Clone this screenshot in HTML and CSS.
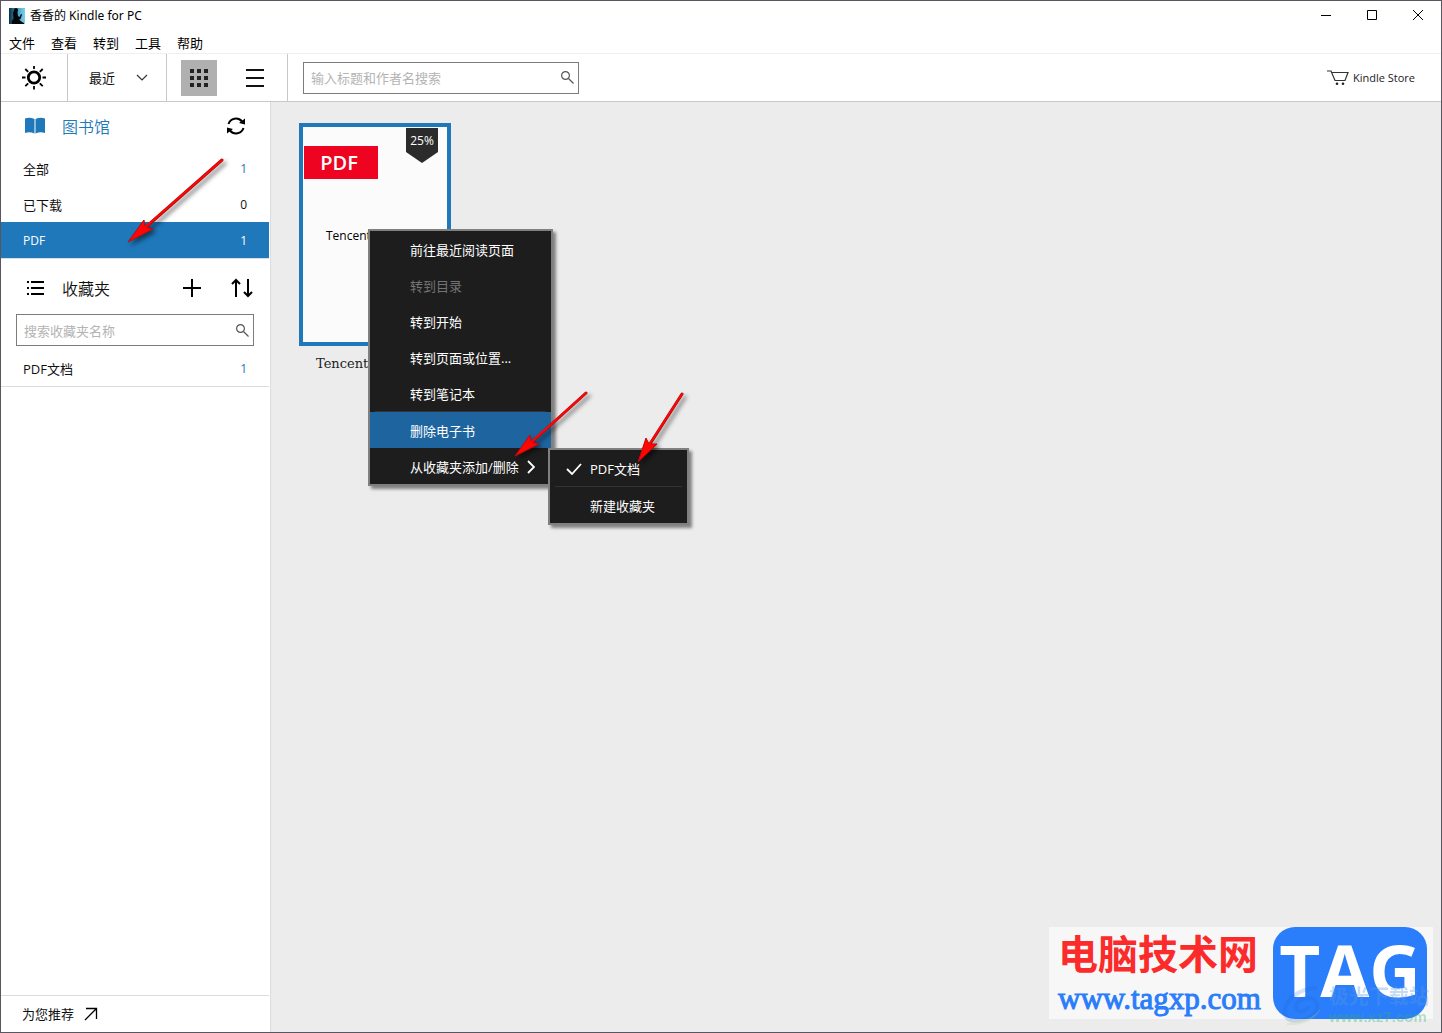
FILE: index.html
```html
<!DOCTYPE html>
<html lang="zh-CN">
<head>
<meta charset="utf-8">
<meta name="viewport" content="width=device-width, initial-scale=1">
<title>香香的 Kindle for PC</title>
<link rel="stylesheet" href="styles.css">
</head>
<body>
<div class="window">
  <header class="titlebar">
    <svg class="app-icon" viewBox="0 0 16 16" aria-hidden="true">
      <defs><linearGradient id="sky" x1="0" y1="0" x2="1" y2="0"><stop offset="0" stop-color="#0d2c40"/><stop offset=".5" stop-color="#3f9cc4"/><stop offset="1" stop-color="#7fd0e6"/></linearGradient></defs>
      <rect width="16" height="16" fill="url(#sky)"/>
      <path d="M5 2a2 2 0 0 1 4 0l-.5 2.500L9 8l1.500 1L12 6l1 .5L11.500 11 10 11.500 13 14l2 1v1H3c-1-2 0-4 1.500-5L4 5z" fill="#02070b"/>
    </svg>
    <h1 class="title">香香的 Kindle for PC</h1>
    <div class="controls">
      <button class="control" aria-label="最小化"><svg width="12" height="12" viewBox="0 0 12 12"><path d="M1 5.500h10" stroke="#000" fill="none"/></svg></button>
      <button class="control" aria-label="最大化"><svg width="12" height="12" viewBox="0 0 12 12"><path d="M1.500 .5h9v9h-9z" stroke="#000" fill="none"/></svg></button>
      <button class="control" aria-label="关闭"><svg width="12" height="12" viewBox="0 0 12 12"><path d="M1 0l10 10M11 0L1 10" stroke="#000" fill="none"/></svg></button>
    </div>
  </header>

  <nav class="menubar">
    <button>文件</button><button>查看</button><button>转到</button><button>工具</button><button>帮助</button>
  </nav>

  <div class="toolbar">
    <button class="theme" aria-label="主题">
      <svg width="24" height="24" viewBox="0 0 24 24" fill="none" stroke="#000">
        <circle cx="12" cy="11.500" r="5.700" stroke-width="2.800"/>
        <path d="M12 0v3M12 20v3.500M0 11.500h3.500M20.500 11.500H24M3.300 3l2.900 2.900M17.800 17.300l2.900 2.900M3.300 20.200l2.900-2.900M17.800 5.900L20.700 3" stroke-width="1.800"/>
      </svg>
    </button>
    <button class="sort">最近
      <svg width="12" height="8" viewBox="0 0 12 8"><path d="M1 1l5 5 5-5" fill="none" stroke="#333" stroke-width="1.200"/></svg>
    </button>
    <div class="views">
      <button class="view active" aria-label="网格视图">
        <svg width="18" height="18" viewBox="0 0 18 18" fill="#222"><path d="M0 0h4v4H0zM7 0h4v4H7zM14 0h4v4h-4zM0 7h4v4H0zM7 7h4v4H7zM14 7h4v4h-4zM0 14h4v4H0zM7 14h4v4H7zM14 14h4v4h-4z"/></svg>
      </button>
      <button class="view" aria-label="列表视图">
        <svg width="18" height="18" viewBox="0 0 18 18"><path d="M0 1h18M0 9h18M0 17h18" stroke="#111" stroke-width="2"/></svg>
      </button>
    </div>
    <label class="search">
      <input type="text" placeholder="输入标题和作者名搜索" aria-label="搜索图书">
      <svg class="lens" viewBox="0 0 13 13"><circle cx="4.500" cy="4.500" r="3.900"/><path d="M7.500 7.500L12.500 12.500"/></svg>
    </label>
    <a class="store" href="#store">
      <svg width="22" height="16" viewBox="0 0 22 16"><path d="M0 1h4l4 9.500h10L21 2.500H5" fill="none" stroke="#333" stroke-width="1.200"/><circle cx="10" cy="13.700" r="1.300" fill="#222"/><circle cx="16" cy="13.700" r="1.300" fill="#222"/></svg>
      Kindle Store
    </a>
  </div>

  <div class="body">
    <aside class="sidebar">
      <div class="section-head library">
        <svg class="section-icon" viewBox="0 0 20 18"><path d="M0 1.500C3 .5 6 .5 9.500 2v14.500C6 15 3 15 0 16zM10.500 2C14 .5 17 .5 20 1.500V16c-3-1-6-1-9.500.5z" fill="#1f78ba"/></svg>
        <h2>图书馆</h2>
        <button class="sync" aria-label="同步">
          <svg width="18" height="18" viewBox="0 0 18 18"><path d="M1.500 7A7.800 7.800 0 0 1 15 4.500M16.500 11A7.800 7.800 0 0 1 3 13.500" fill="none" stroke="#000" stroke-width="2"/><path d="M18 1.500v6l-6-1.500zM0 16.500v-6l6 1.500z"/></svg>
        </button>
      </div>
      <ul class="list">
        <li><a href="#all">全部 <span class="count blue">1</span></a></li>
        <li><a href="#downloaded">已下载 <span class="count">0</span></a></li>
        <li><a class="selected" href="#pdf">PDF <span class="count">1</span></a></li>
      </ul>
      <div class="section-head collections">
        <svg class="section-icon" viewBox="0 0 20 18"><path d="M6 3h13M6 9h13M6 15h13" stroke="#000" stroke-width="2"/><path d="M2 2h2v2H2zM2 8h2v2H2zM2 14h2v2H2z"/></svg>
        <h2>收藏夹</h2>
        <button class="add" aria-label="新建收藏夹"><svg width="18" height="18" viewBox="0 0 18 18"><path d="M0 9h18M9 0v18" stroke="#000" stroke-width="2"/></svg></button>
        <button class="order" aria-label="排序"><svg width="22" height="20" viewBox="0 0 22 20" fill="none" stroke="#000" stroke-width="2"><path d="M5 19V2M1 6l4-4 4 4M17 1v17M13 14l4 4 4-4"/></svg></button>
      </div>
      <label class="search">
        <input type="text" placeholder="搜索收藏夹名称" aria-label="搜索收藏夹">
        <svg class="lens" viewBox="0 0 13 13"><circle cx="4.500" cy="4.500" r="3.900"/><path d="M7.500 7.500L12.500 12.500"/></svg>
      </label>
      <ul class="list">
        <li><a href="#pdf-docs">PDF文档 <span class="count blue">1</span></a></li>
      </ul>
      <a class="recommend" href="#recommend">为您推荐
        <svg width="14" height="14" viewBox="0 0 14 14"><path d="M1 13L12.500 1.500M2 1.500h10.500V12" fill="none" stroke="#000" stroke-width="1.300"/></svg>
      </a>
    </aside>

    <main class="content">
      <article class="book">
        <div class="cover">
          <span class="format">PDF</span>
          <span class="cover-title">Tencent</span>
          <span class="progress">25%</span>
        </div>
        <h3 class="book-title">Tencent</h3>
      </article>

      <div class="menu book-menu" role="menu">
        <button role="menuitem">前往最近阅读页面</button>
        <button role="menuitem" disabled>转到目录</button>
        <button role="menuitem">转到开始</button>
        <button role="menuitem">转到页面或位置...</button>
        <button role="menuitem">转到笔记本</button>
        <hr>
        <button role="menuitem" class="hover">删除电子书</button>
        <button role="menuitem">从收藏夹添加/删除
          <svg class="chevron" width="8" height="14" viewBox="0 0 8 14"><path d="M1 1l6 6-6 6" fill="none" stroke="#fff" stroke-width="1.800"/></svg>
        </button>
      </div>
      <div class="menu sub-menu" role="menu">
        <button role="menuitem"><svg class="check" width="16" height="12" viewBox="0 0 16 12"><path d="M1 6l5 5L15 1" fill="none" stroke="#fff" stroke-width="1.800"/></svg>PDF文档</button>
        <hr>
        <button role="menuitem">新建收藏夹</button>
      </div>

      <div class="watermark">
        <div class="site">
          <strong>电脑技术网</strong>
          <span>www.tagxp.com</span>
        </div>
        <div class="tag">TAG</div>
        <div class="partner">
          <svg width="44" height="40" viewBox="0 0 44 40" fill="none">
            <path d="M34 2C16 2 0 15 2 28c2 9 17 9 26 2 9-6 8-18-3-18-9 0-15 8-11 12 4 3 11 0 11-4" stroke="#1c62c4" stroke-width="4" opacity=".5"/>
            <path d="M4 37c12 0 26-4 34-15-5 12-18 18-34 17z" fill="#b9c977" opacity=".7"/>
          </svg>
          <div><span class="partner-name">极光下载站</span><span class="partner-url">www.xz7.com</span></div>
        </div>
      </div>
    </main>
  </div>

  <svg class="pointers" width="700" height="540" viewBox="0 0 700 540" aria-hidden="true">
    <g stroke="#a01010" stroke-width="3" stroke-linecap="round"><path d="M222 160L146 227M586 393L533 441M682 394L650 444"/></g>
    <g fill="#ff0505" stroke="#c00808" stroke-width="1" stroke-linejoin="round"><path d="M128 242l16-22 1 7 8 2zM515 456l15-21 1 7 8 2zM638 462l8-24 3 6 8 0z"/></g>
    <g stroke="#ff0505" stroke-width="2" stroke-linecap="round"><path d="M222 160L142 230M586 393L528 445M682 394L647 448"/></g>
  </svg>
</div>
</body>
</html>
```

FILE: styles.css
```css
* { box-sizing: border-box; }

body {
  margin: 0;
  font: 13px/18px "Open Sans", "Noto Sans CJK SC", sans-serif;
  color: #111;
}

button, input { font: inherit; color: inherit; }
button { padding: 0; border: 0; background: none; }
a { color: inherit; text-decoration: none; }
h1, h2, h3, ul { margin: 0; padding: 0; font-weight: 400; list-style: none; }
svg { display: block; flex: none; }

.window {
  position: relative;
  display: flex;
  flex-direction: column;
  min-height: 100vh;
  border: 1px solid #5a5560;
  background: #fff;
}

.titlebar { display: flex; align-items: center; height: 29px; padding-left: 8px; }
.app-icon { width: 16px; height: 16px; }
.title { margin-left: 5px; font: 12px/18px "Noto Sans", "Noto Sans CJK SC", sans-serif; color: #000; }
.controls { display: flex; margin-left: auto; }
.control { display: grid; place-items: center; width: 46px; height: 29px; }

.menubar {
  display: flex;
  gap: 16px;
  height: 24px;
  padding: 2px 0 0 8px;
  border-bottom: 1px solid #f0f0f0;
  color: #000;
}

.toolbar {
  display: flex;
  align-items: center;
  height: 48px;
  border-bottom: 1px solid #c8c8c8;
}
.theme, .sort, .views { height: 100%; border-right: 1px solid #c8c8c8; }
.theme { display: grid; place-items: center; width: 67px; }
.sort { display: flex; align-items: center; gap: 21px; width: 99px; padding-left: 21px; }
.views { display: flex; align-items: center; gap: 20px; width: 121px; padding-left: 14px; }
.view { display: grid; place-items: center; width: 36px; height: 36px; }
.view.active { background: #b0b0b0; }

.search {
  display: flex;
  align-items: center;
  height: 32px;
  border: 1px solid #7c7c7c;
  background: #fff;
}
.search input { flex: 1; min-width: 0; padding: 1px 7px 0; border: 0; outline: 0; background: none; }
.search input::placeholder { color: #b4b4b4; opacity: 1; }
.lens { width: 13px; height: 13px; margin-right: 4px; fill: none; stroke: #555; stroke-width: 1.200; }
.toolbar .search { width: 276px; margin-left: 15px; }

.store { display: flex; align-items: center; gap: 4px; margin: 0 26px 0 auto; font-size: 11px; color: #222; }

.body { display: flex; flex: 1; }

.sidebar {
  display: flex;
  flex: none;
  flex-direction: column;
  width: 270px;
  padding-right: 1px;
  border-right: 1px solid #dcdcdc;
}
.section-head { display: flex; align-items: center; padding-left: 24px; }
.section-head h2 { flex: 1; margin-left: 17px; padding-top: 2px; font-size: 16px; line-height: 24px; font-weight: 350; }
.section-icon { width: 20px; height: 18px; }
.library { height: 48px; color: #1f78ba; }
.sync { margin-right: 24px; }
.collections { height: 57px; }
.add { margin-right: 30px; }
.order { margin-right: 16px; }

.list { border-bottom: 1px solid #dcdcdc; }
.list a { display: flex; align-items: center; justify-content: space-between; height: 36px; padding: 2px 22px 0; }
.list .selected { background: #1f78ba; color: #fff; }
.list a, .count { font-size: 13px; }
.list .selected, .count { font-size: 12px; }
.blue { color: #1f78ba; }
.sidebar .search { margin: -2px 15px 4px; }
.recommend {
  display: flex;
  align-items: center;
  gap: 10px;
  height: 37px;
  margin-top: auto;
  padding-left: 21px;
  border-top: 1px solid #dcdcdc;
}

.content { position: relative; flex: 1; min-width: 0; padding: 21px 28px; background: #ececec; }

.book { width: 152px; }
.cover { position: relative; height: 223px; padding: 19px 1px; border: 4px solid #1f78ba; background: #fbfbfb; }
.format {
  display: block;
  width: 74px;
  height: 33px;
  padding-right: 4px;
  background: #ee0420;
  color: #fff;
  font: 600 20px/33px "Open Sans", sans-serif;
  text-align: center;
}
.cover-title { display: block; margin: 48px 0 0 22px; font-size: 12px; color: #000; }
.progress {
  position: absolute;
  top: 1px;
  right: 9px;
  width: 32px;
  height: 35px;
  background: #2b2b2b;
  clip-path: polygon(0 0, 100% 0, 100% 24px, 50% 100%, 0 24px);
  color: #fff;
  font-size: 12px;
  line-height: 26px;
  text-align: center;
}
.book-title { margin: 9px 17px; font: 13px/18px "DejaVu Serif", serif; color: #222; }

.menu {
  position: absolute;
  border: 2px solid #808080;
  background: #1d1d1d;
  box-shadow: 3px 3px 3px rgba(0, 0, 0, 0.45);
  color: #fff;
}
.menu button { position: relative; display: flex; align-items: center; width: 100%; height: 36px; padding: 2px 0 0 40px; white-space: nowrap; }
.menu button:disabled { color: #747474; }
.menu .hover { background: #1e659f; }
.menu hr { height: 1px; margin: 0 5px; border: 0; background: #333; }
.book-menu { top: 127px; left: 97px; width: 185px; }
.sub-menu { top: 346px; left: 277px; width: 141px; }
.chevron { margin-left: 8px; }
.check { position: absolute; left: 16px; }

.watermark {
  position: absolute;
  right: 8px;
  bottom: 13px;
  display: flex;
  width: 384px;
  height: 92px;
  background: #f7f7f7;
}
.site { width: 224px; padding-left: 9px; white-space: nowrap; }
.site strong, .site span { display: block; }
.site strong { color: #fb2b2b; font: 700 40px/50px "Noto Sans CJK SC", sans-serif; }
.site span { color: #2a7dfb; font: 31px/44px "Liberation Serif", serif; -webkit-text-stroke: 1px #2a7dfb; }
.tag {
  width: 154px;
  border-radius: 22px;
  background: #2a7dfb;
  color: #fff;
  font: 700 71px/86px "Open Sans", sans-serif;
  text-align: center;
}
.partner { position: absolute; right: 0; bottom: -7px; display: flex; align-items: flex-end; gap: 2px; opacity: 0.35; }
.partner span { display: block; width: 104px; white-space: nowrap; }
.partner-name { color: #5a9be0; font: 700 20px/24px "Noto Sans CJK SC", sans-serif; }
.partner-url { color: #35b56b; font: 700 15px/18px "Liberation Sans", sans-serif; }

.pointers { position: absolute; top: -1px; left: -1px; pointer-events: none; filter: drop-shadow(3px 3px 2px rgba(0, 0, 0, 0.5)); }
```
